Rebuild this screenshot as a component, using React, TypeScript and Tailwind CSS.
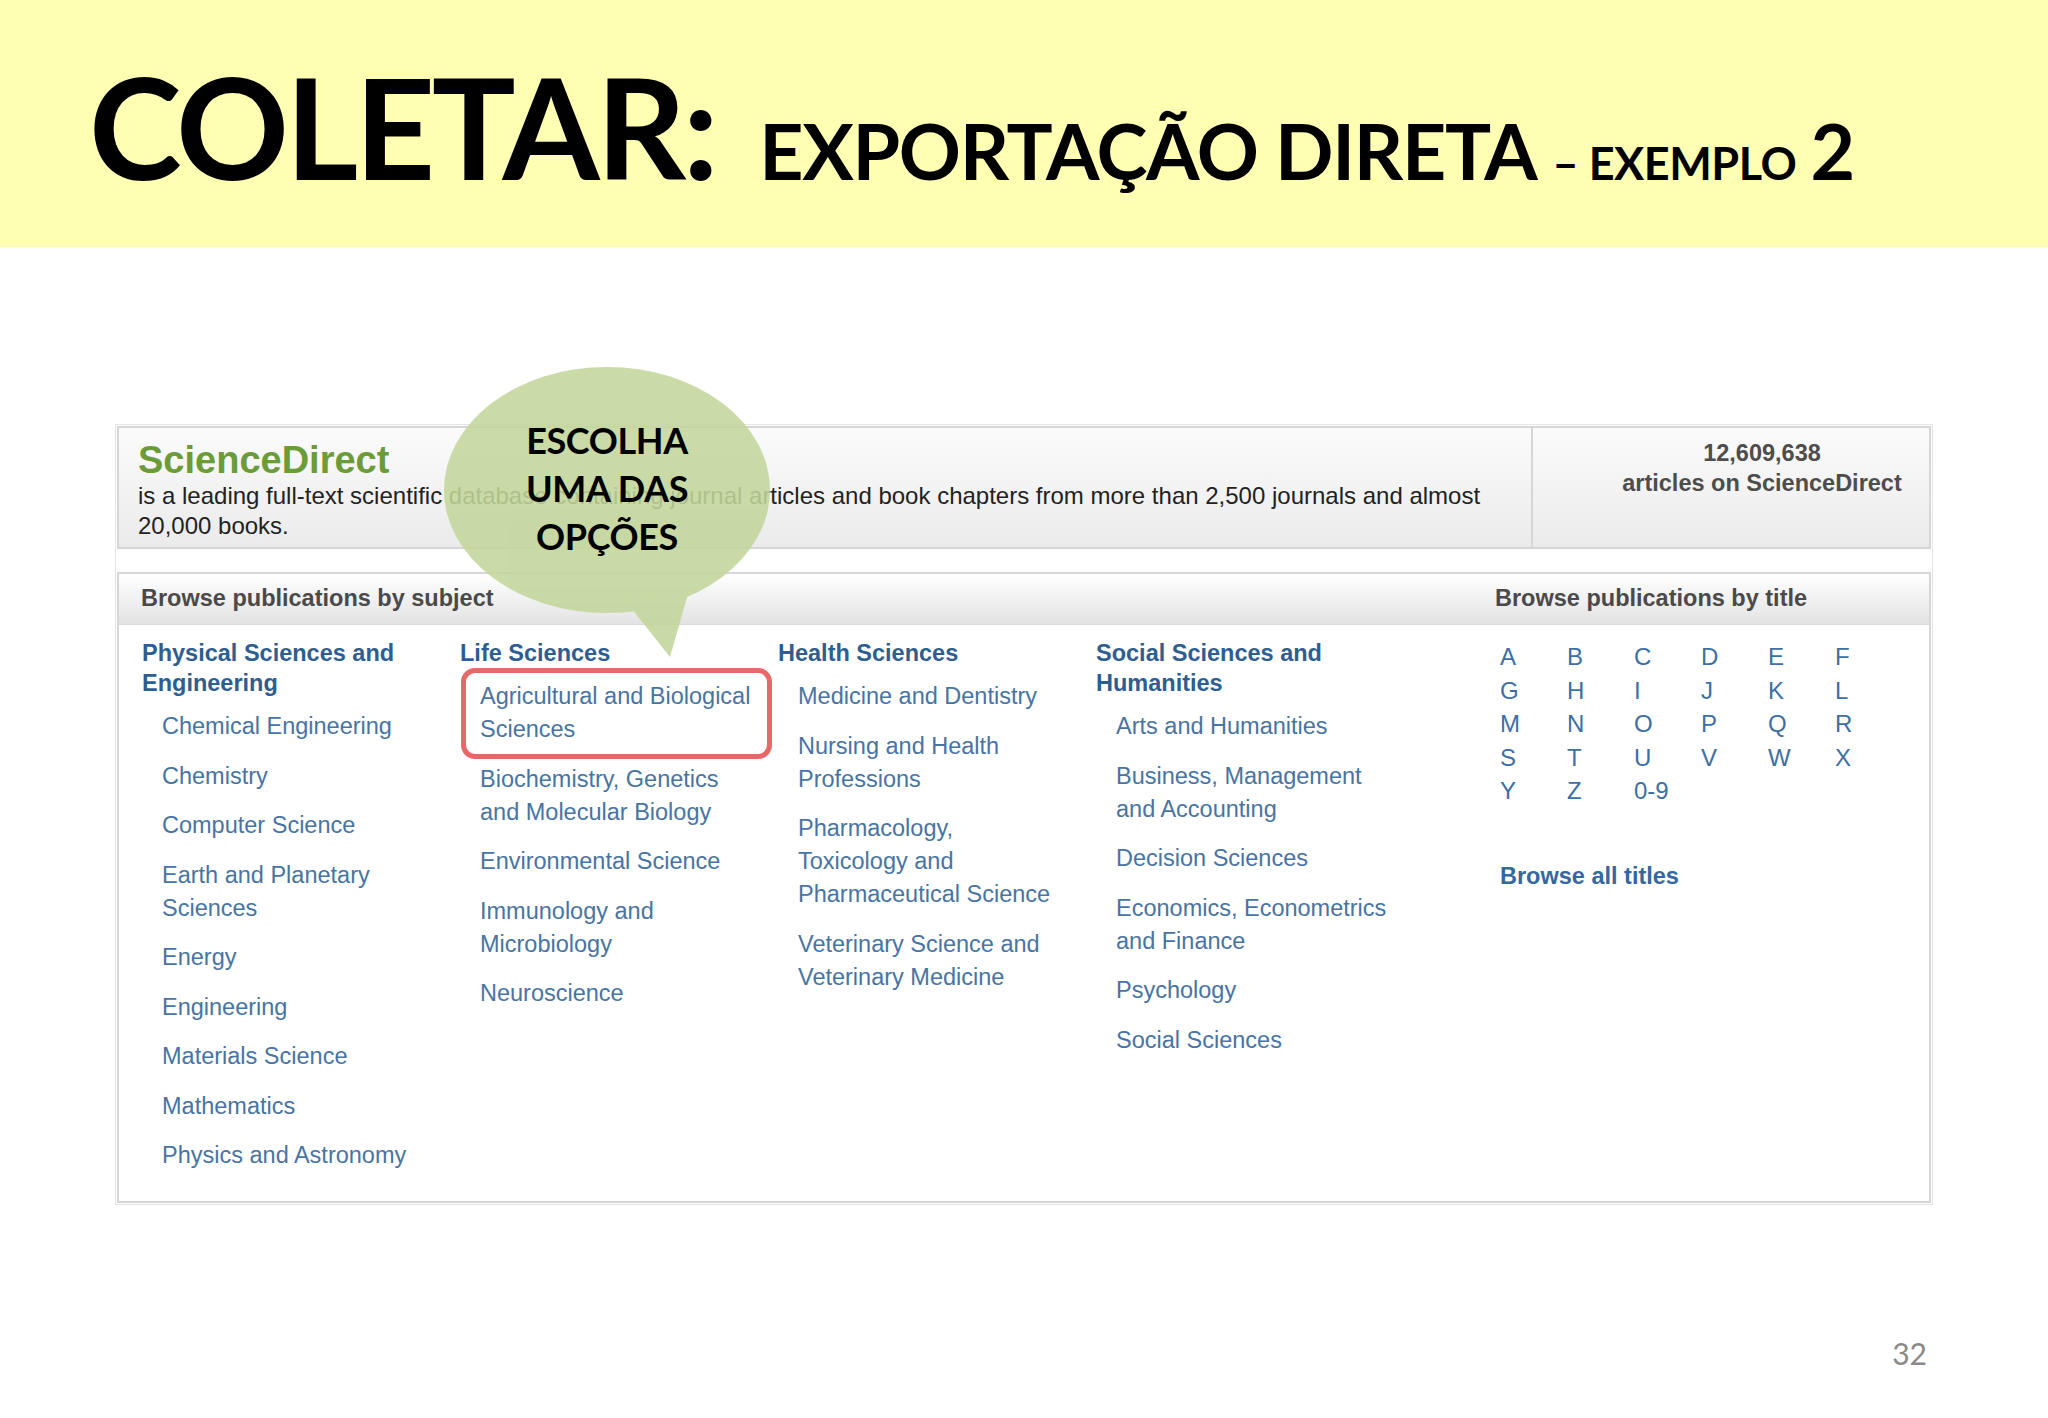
const title = "font-['Lato','Open_Sans',sans-serif]";
const arial = "font-['Liberation_Sans',Arial,sans-serif]";

type Col = { heading: string[]; items: string[][] };

const columns: Col[] = [
  {
    heading: ["Physical Sciences and", "Engineering"],
    items: [
      ["Chemical Engineering"],
      ["Chemistry"],
      ["Computer Science"],
      ["Earth and Planetary", "Sciences"],
      ["Energy"],
      ["Engineering"],
      ["Materials Science"],
      ["Mathematics"],
      ["Physics and Astronomy"],
    ],
  },
  {
    heading: ["Life Sciences"],
    items: [
      ["Agricultural and Biological", "Sciences"],
      ["Biochemistry, Genetics", "and Molecular Biology"],
      ["Environmental Science"],
      ["Immunology and", "Microbiology"],
      ["Neuroscience"],
    ],
  },
  {
    heading: ["Health Sciences"],
    items: [
      ["Medicine and Dentistry"],
      ["Nursing and Health", "Professions"],
      ["Pharmacology,", "Toxicology and", "Pharmaceutical Science"],
      ["Veterinary Science and", "Veterinary Medicine"],
    ],
  },
  {
    heading: ["Social Sciences and", "Humanities"],
    items: [
      ["Arts and Humanities"],
      ["Business, Management", "and Accounting"],
      ["Decision Sciences"],
      ["Economics, Econometrics", "and Finance"],
      ["Psychology"],
      ["Social Sciences"],
    ],
  },
];

const letters = [
  "A", "B", "C", "D", "E", "F",
  "G", "H", "I", "J", "K", "L",
  "M", "N", "O", "P", "Q", "R",
  "S", "T", "U", "V", "W", "X",
  "Y", "Z", "0-9",
];

function Lines({ lines }: { lines: string[] }) {
  return (
    <>
      {lines.map((l) => (
        <span key={l} className="block whitespace-nowrap">
          {l}
        </span>
      ))}
    </>
  );
}

function SubjectColumn({ col, highlightFirst }: { col: Col; highlightFirst?: boolean }) {
  return (
    <div className="w-[318px] shrink-0">
      <h3 className="mb-[12px] text-[23.5px] font-bold leading-[30px] text-[#2e5e91]">
        <Lines lines={col.heading} />
      </h3>
      <ul className="flex flex-col gap-[16.5px] pl-[20px]">
        {col.items.map((it, i) => (
          <li key={it[0]} className="relative text-[23.5px] leading-[33px] text-[#4874a3]">
            <Lines lines={it} />
            {highlightFirst && i === 0 && (
              <span className="absolute -left-[19px] -top-[12px] h-[91px] w-[311px] rounded-[14px] border-[5px] border-[#e46a6a]" />
            )}
          </li>
        ))}
      </ul>
    </div>
  );
}

function Bubble() {
  return (
    <div className="absolute left-[444px] top-[367px] h-[292px] w-[326px]">
      <svg width="326" height="292" viewBox="0 0 326 292" className="absolute inset-0">
        <g opacity="0.88" fill="#c3d69b">
          <ellipse cx="163" cy="123" rx="163" ry="123" />
          <polygon points="180,232 246,220 226,290" />
        </g>
      </svg>
      <div className={`${title} absolute inset-x-0 top-[49px] text-center text-[36px] font-bold leading-[48px] tracking-[-0.01em] text-black`}>
        <div>ESCOLHA</div>
        <div>UMA DAS</div>
        <div>OPÇÕES</div>
      </div>
    </div>
  );
}

export default function App() {
  return (
    <div className="relative h-[1418px] w-[2048px] overflow-hidden bg-white">
      <header className="h-[247px] bg-[#ffffb4]">
        <h1 className={`${title} flex items-baseline pl-[89px] pt-[56px] font-bold leading-none text-black`}>
          <span className="text-[140px] tracking-[-0.025em]">COLETAR:</span>
          <span className="ml-[44px] text-[77px] tracking-[-0.017em]">EXPORTAÇÃO DIRETA</span>
          <span className="ml-[16px] text-[45px] tracking-[-0.01em]">– EXEMPLO</span>
          <span className="ml-[14px] text-[77px]">2</span>
        </h1>
      </header>

      <section className={`${arial} ml-[115px] mt-[177px] h-[781px] w-[1818px] border border-[#e4e4e4] p-px`}>
        <div className="flex h-[123px] border-2 border-[#d6d6d6] bg-gradient-to-b from-[#fbfbfb] to-[#ebebeb]">
          <div className="w-[1414px] shrink-0 border-r-2 border-[#d6d6d6] pl-[19px] pt-[11px]">
            <div className="text-[38px] font-bold leading-[42px] text-[#6c9b3a]">ScienceDirect</div>
            <p className="text-[24px] leading-[30px] text-[#222]">
              <span className="block whitespace-nowrap">
                is a leading full-text scientific database containing journal articles and book chapters from more than 2,500 journals and almost
              </span>
              <span className="block">20,000 books.</span>
            </p>
          </div>
          <div className="flex-1 pl-[62px] pt-[10px] text-center text-[23.5px] font-bold leading-[30px] text-[#4d4d4d]">
            <div>12,609,638</div>
            <div>articles on ScienceDirect</div>
          </div>
        </div>

        <div className="mt-[23px] h-[631px] border-2 border-[#d6d6d6] bg-white">
          <div className="flex h-[51px] items-center border-b border-[#d9d9d9] bg-gradient-to-b from-[#ffffff] to-[#e3e3e3] text-[23.5px] font-bold text-[#4a4a4a]">
            <span className="w-[1376px] shrink-0 pl-[22px]">Browse publications by subject</span>
            <span>Browse publications by title</span>
          </div>

          <div className="flex pl-[23px] pt-[13px]">
            {columns.map((c, i) => (
              <SubjectColumn key={c.heading[0]} col={c} highlightFirst={i === 1} />
            ))}
            <div className="ml-[86px] pt-[2px]">
              <div className="grid grid-cols-[repeat(6,67px)] text-[24px] leading-[33.5px] text-[#3d6fa5]">
                {letters.map((l) => (
                  <span key={l}>{l}</span>
                ))}
              </div>
              <div className="mt-[53px] text-[23.5px] font-bold leading-[30px] text-[#3567a0]">Browse all titles</div>
            </div>
          </div>
        </div>
      </section>

      <div className={`${title} mt-[133px] flex justify-end pr-[121px] text-[30px] leading-none text-[#898989]`}>32</div>

      <Bubble />
    </div>
  );
}
